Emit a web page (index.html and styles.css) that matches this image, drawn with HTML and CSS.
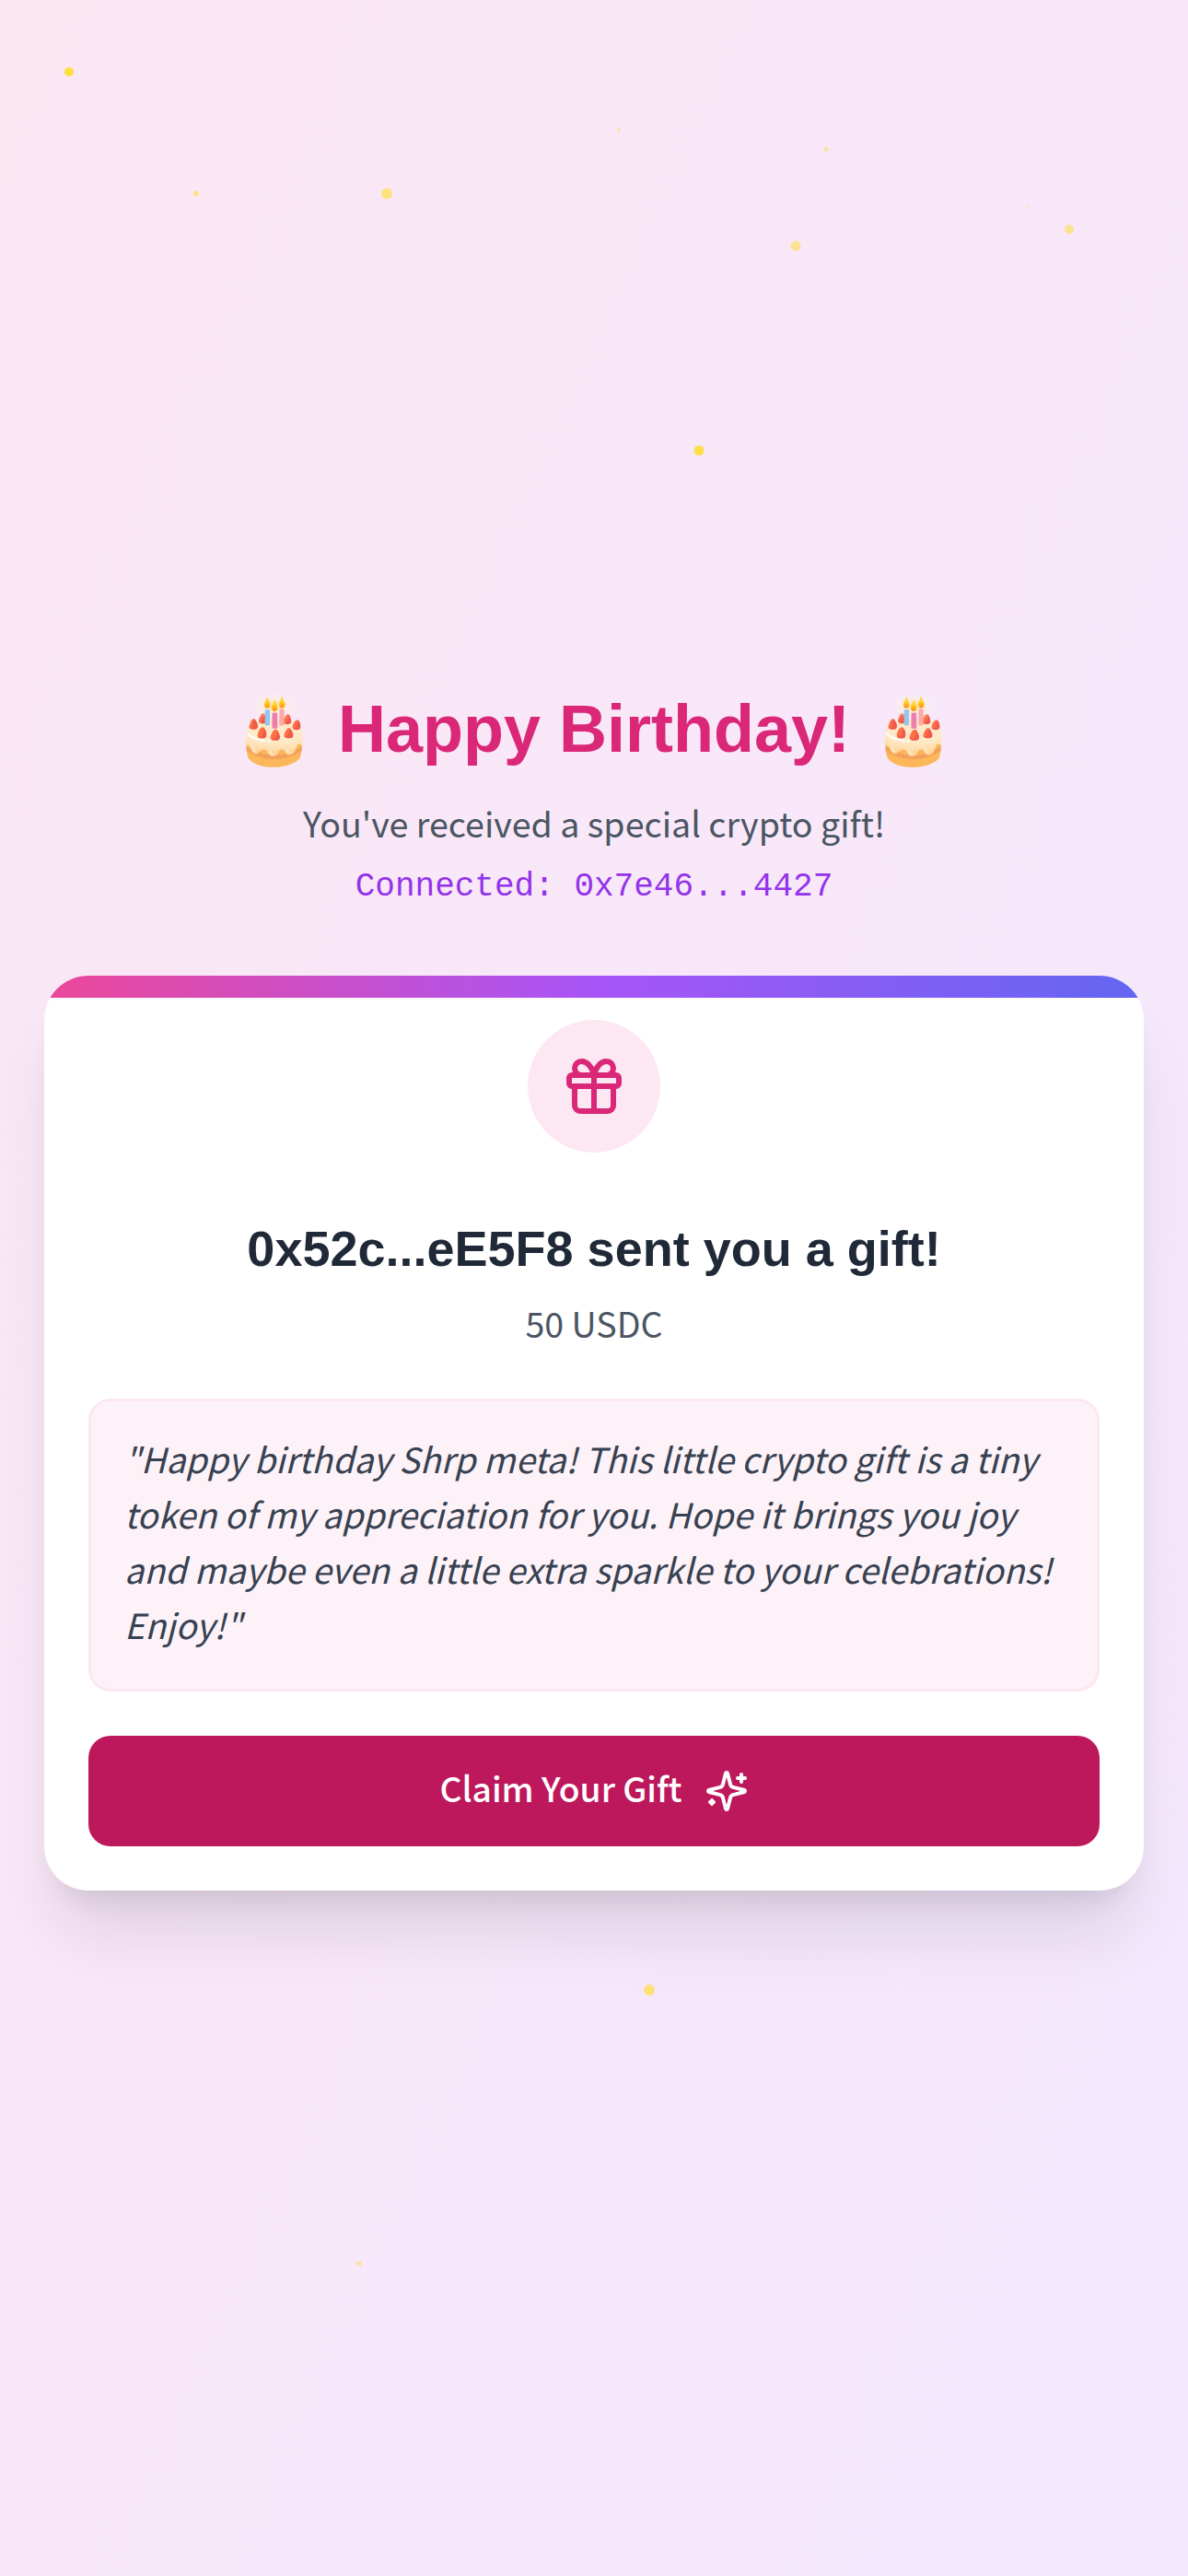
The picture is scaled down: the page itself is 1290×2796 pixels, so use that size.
FILE: index.html
```html
<!DOCTYPE html>
<html lang="en">
<head>
<meta charset="utf-8">
<title>Happy Birthday!</title>
<link rel="stylesheet" href="styles.css">
</head>
<body>
<div class="page">
  <div class="confetti" aria-hidden="true">
    <i class="dot" style="left:75px;top:78px;width:10px;opacity:1"></i>
    <i class="dot" style="left:213px;top:210px;width:6px;opacity:.6"></i>
    <i class="dot" style="left:420px;top:210px;width:12px;opacity:.66"></i>
    <i class="dot" style="left:672px;top:141px;width:4px;opacity:.4"></i>
    <i class="dot" style="left:897px;top:162px;width:5px;opacity:.5"></i>
    <i class="dot" style="left:1116px;top:225px;width:4px;opacity:.2"></i>
    <i class="dot" style="left:1161px;top:249px;width:10px;opacity:.55"></i>
    <i class="dot" style="left:864px;top:267px;width:11px;opacity:.55"></i>
    <i class="dot" style="left:759px;top:489px;width:11px;opacity:.95"></i>
    <i class="dot" style="left:705px;top:2160px;width:12px;opacity:.7"></i>
    <i class="dot" style="left:390px;top:2457px;width:6px;opacity:.45"></i>
  </div>
  <main class="content">
    <header class="intro">
      <h1 class="title"><span class="cake">🎂</span> Happy Birthday! <span class="cake">🎂</span></h1>
      <p class="subtitle">You've received a special crypto gift!</p>
      <p class="wallet">Connected: 0x7e46...4427</p>
    </header>
    <section class="card">
      <div class="card-bar"></div>
      <div class="card-body">
        <div class="gift-badge">
          <svg class="gift-icon" viewBox="0 0 24 24"><rect x="3" y="8" width="18" height="4" rx="1"/><path d="M12 8v13"/><path d="M19 12v7a2 2 0 0 1-2 2H7a2 2 0 0 1-2-2v-7"/><path d="M7.5 8a2.5 2.5 0 0 1 0-5A4.8 8 0 0 1 12 8a4.8 8 0 0 1 4.5-5 2.5 2.5 0 0 1 0 5"/></svg>
        </div>
        <h2 class="sender">0x52c...eE5F8 sent you a gift!</h2>
        <p class="amount">50 USDC</p>
        <p class="message">"Happy birthday Shrp meta! This little crypto gift is a tiny token of my appreciation for you. Hope it brings you joy and maybe even a little extra sparkle to your celebrations! Enjoy!"</p>
        <button class="claim">
          <span class="claim-label">Claim Your Gift</span>
          <svg class="sparkle-icon" viewBox="0 0 24 24"><path d="M9.937 15.5A2 2 0 0 0 8.5 14.063l-6.135-1.582a.5.5 0 0 1 0-.962L8.5 9.936A2 2 0 0 0 9.937 8.5l1.582-6.135a.5.5 0 0 1 .963 0L14.063 8.5A2 2 0 0 0 15.5 9.937l6.135 1.581a.5.5 0 0 1 0 .964L15.5 14.063a2 2 0 0 0-1.437 1.437l-1.582 6.135a.5.5 0 0 1-.963 0z"/><path d="M20 3v4"/><path d="M22 5h-4"/><path d="M4 17v2"/><path d="M5 18H3"/></svg>
        </button>
      </div>
    </section>
  </main>
</div>
</body>
</html>
```
FILE: styles.css
```css
* { box-sizing: border-box; margin: 0; }

body {
  font-family: "Noto Sans CJK SC", "Noto Sans", sans-serif;
  font-size: 37.6px;
  line-height: 60px;
}

.page {
  position: relative;
  min-height: 2796px;
  display: flex;
  align-items: center;
  padding: 0 48px;
  overflow: hidden;
  background: linear-gradient(to bottom right, #fce7f3, #f3e8ff);
}

.confetti { position: absolute; inset: 0; }

.dot {
  position: absolute;
  aspect-ratio: 1;
  border-radius: 50%;
  background: #ffdf40;
  transform: translate(-50%, -50%);
}

.content { position: relative; flex: 1; }

.intro { text-align: center; margin-bottom: 72px; }

.title {
  font: bold 72px/94px "Liberation Sans", "Noto Color Emoji", sans-serif;
  color: #db2777;
}

.cake:first-child { margin-right: 4px; }
.cake:last-child { margin-left: 4px; }

.subtitle { margin-top: 25px; color: #4b5563; }

.wallet {
  margin-top: 16px;
  font: 36px/48px "Liberation Mono", monospace;
  color: #9333ea;
}

.card {
  overflow: hidden;
  border-radius: 48px;
  background: #fff;
  box-shadow: 0 60px 75px -15px rgba(0, 0, 0, .1), 0 24px 30px -18px rgba(0, 0, 0, .1);
}

.card-bar { height: 24px; background: linear-gradient(to right, #ec4899, #a855f7, #6366f1); }

.card-body {
  display: flex;
  flex-direction: column;
  align-items: center;
  padding: 24px 48px 48px;
}

.gift-badge {
  display: grid;
  place-items: center;
  width: 144px;
  height: 144px;
  border-radius: 50%;
  background: #fce7f3;
}

svg { fill: none; stroke: currentColor; stroke-width: 2; stroke-linecap: round; stroke-linejoin: round; }

.gift-icon { width: 72px; height: 72px; color: #db2777; }

.sender {
  margin-top: 62px;
  font: bold 54px/84px "Liberation Sans", sans-serif;
  color: #1f2937;
}

.amount { margin-top: 9px; color: #4b5563; }

.message {
  align-self: stretch;
  margin-top: 52px;
  padding: 32px 36px 40px;
  border: 3px solid #fce7f3;
  border-radius: 24px;
  background: #fdf2f8;
  color: #374151;
  font-style: italic;
}

.claim {
  align-self: stretch;
  display: flex;
  align-items: center;
  justify-content: center;
  gap: 24px;
  height: 120px;
  margin-top: 48px;
  border: 0;
  border-radius: 24px;
  background: #be185d;
  color: #fff;
  font: 500 37.2px/60px "Noto Sans CJK SC", "Noto Sans", sans-serif;
}

.claim-label { padding-bottom: 8px; }

.sparkle-icon { width: 48px; height: 48px; }
```
